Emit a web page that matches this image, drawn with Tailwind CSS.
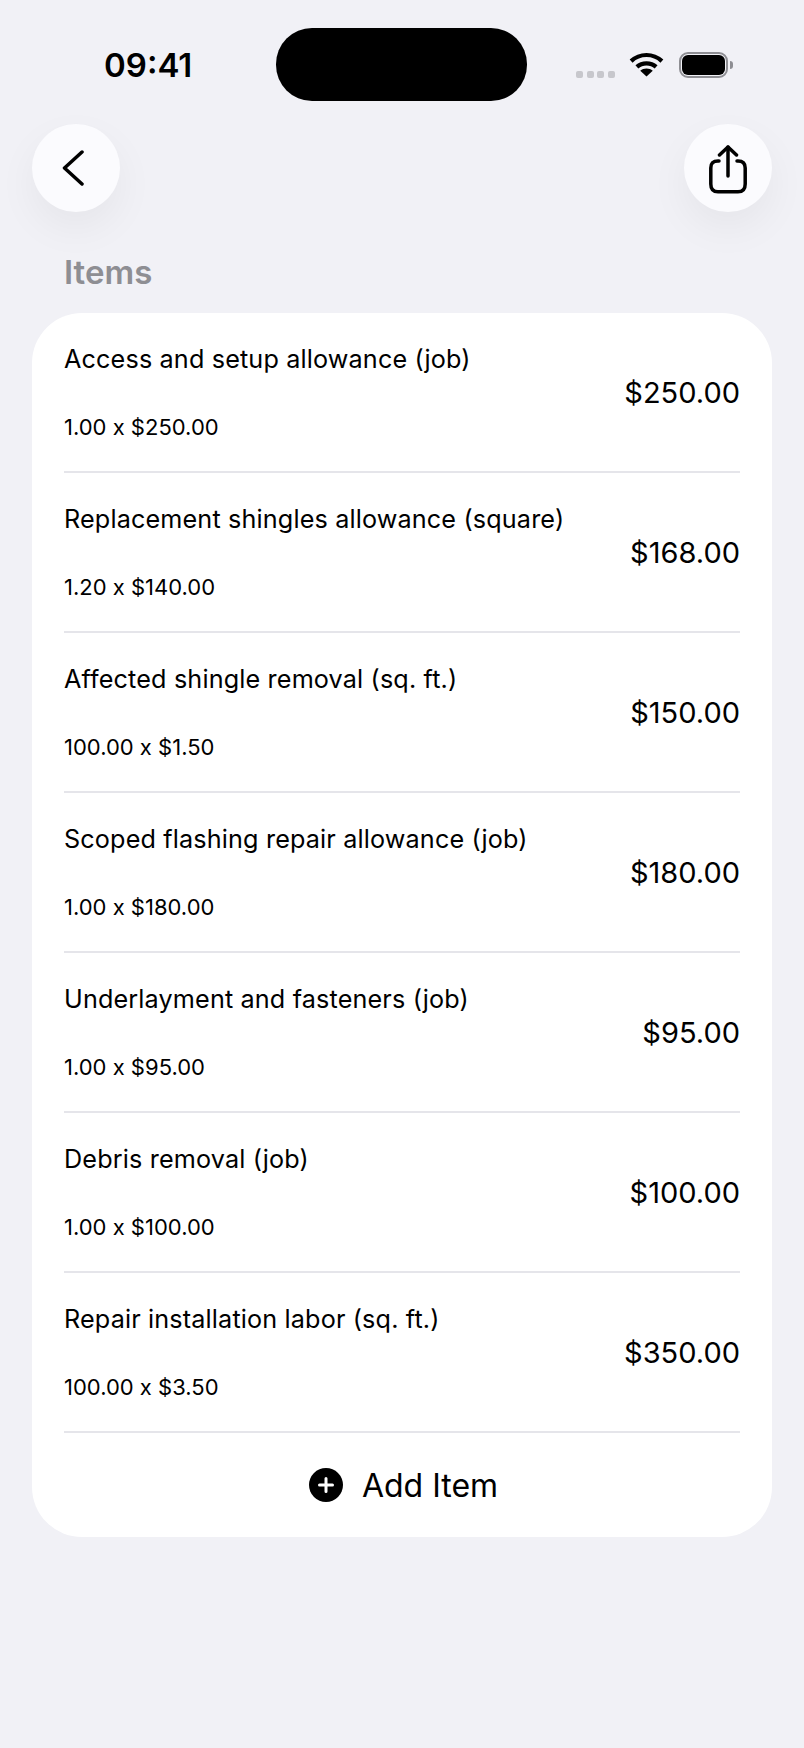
<!DOCTYPE html>
<html lang="en">
<head>
    <meta charset="UTF-8">
    <meta name="viewport" content="width=device-width, initial-scale=1.0">
    <title>Items</title>
    <script src="https://cdn.jsdelivr.net/npm/@tailwindcss/browser@4"></script>
</head>
<body class="bg-[#f1f1f6] w-[804px] h-[1748px] overflow-hidden font-['Inter',sans-serif] text-black">

    <!-- Status bar -->
    <div class="flex items-start h-[124px] pl-[104px]">
        <div class="w-[172px] mt-[45px] text-[33px] leading-[41px] font-semibold">09:41</div>
        <div class="w-[251px] h-[73px] mt-[28px] rounded-[36px] bg-black"></div>
        <div class="flex items-start ml-[49px]">
            <div class="flex gap-[3.67px] mt-[70.500px]">
                <span class="w-[7px] h-[7px] rounded-[2px] bg-[#c7c7cc]"></span>
                <span class="w-[7px] h-[7px] rounded-[2px] bg-[#c7c7cc]"></span>
                <span class="w-[7px] h-[7px] rounded-[2px] bg-[#c7c7cc]"></span>
                <span class="w-[7px] h-[7px] rounded-[2px] bg-[#c7c7cc]"></span>
            </div>
            <svg class="ml-[14px] mt-[52px]" width="35" height="25" viewBox="0 0 36 26" fill="none" stroke="black" stroke-width="4.4">
                <path d="M2 9.5C11 1 25 1 34 9.5"/>
                <path d="M8 15.5C13.5 10.5 22.500 10.500 28 15.500"/>
                <path d="M18 25.500L11.500 19.500C15 16.500 21 16.500 24.500 19.500Z" fill="black" stroke="none"/>
            </svg>
            <div class="flex items-center ml-[15px] mt-[52px]">
                <div class="w-[49px] h-[26px] p-[1px] rounded-[9px] border-2 border-[#8e8e93]">
                    <div class="w-full h-full rounded-[6px] bg-black"></div>
                </div>
                <div class="w-[3px] h-[8px] ml-[2px] rounded-r-[3px] bg-[#8e8e93]"></div>
            </div>
        </div>
    </div>

    <!-- Nav buttons -->
    <div class="flex justify-between px-[32px]">
        <button class="flex items-center justify-center w-[88px] h-[88px] rounded-full bg-[#fbfbfe] shadow-[0_16px_40px_rgba(0,0,0,0.05)]">
            <svg width="22" height="36" viewBox="0 0 22 36" fill="none" stroke="black" stroke-width="3.5" stroke-linecap="round" stroke-linejoin="round" class="mr-[6px]">
                <path d="M20 2L2.500 18L20 34"/>
            </svg>
        </button>
        <button class="flex items-center justify-center w-[88px] h-[88px] rounded-full bg-[#fbfbfe] shadow-[0_16px_40px_rgba(0,0,0,0.05)]">
            <svg width="38" height="49" viewBox="0 0 38 49" fill="none" stroke="black" stroke-width="3.5" stroke-linecap="round" stroke-linejoin="round" class="mt-[3px]">
                <path d="M10 16H9C4 16 1.800 18.500 1.800 23V39C1.800 44 4 46.800 9 46.800H29C34 46.800 36.200 44 36.200 39V23C36.200 18.500 34 16 29 16H28"/>
                <path d="M19 31V2"/>
                <path d="M10.500 10L19 2L27.500 10"/>
            </svg>
        </button>
    </div>

    <h2 class="mt-[41px] ml-[64px] text-[33px] leading-[39px] font-semibold text-[#8e8e93]">Items</h2>

    <!-- Items card -->
    <div class="mt-[21px] mx-[32px] w-[740px] rounded-[50px] bg-white">
        <div class="flex items-center justify-between h-[160px] mx-[32px] border-b-2 border-[#e5e5ea]">
            <div>
                <p class="text-[25.2px] leading-[30px] tracking-[0.15px]">Access and setup allowance (job)</p>
                <p class="mt-[40px] text-[22px] leading-[26px]">1.00 x $250.00</p>
            </div>
            <p class="mt-[1px] text-[29px] leading-[35px]">$250.00</p>
        </div>
        <div class="flex items-center justify-between h-[160px] mx-[32px] border-b-2 border-[#e5e5ea]">
            <div>
                <p class="text-[25.2px] leading-[30px] tracking-[0.15px]">Replacement shingles allowance (square)</p>
                <p class="mt-[40px] text-[22px] leading-[26px]">1.20 x $140.00</p>
            </div>
            <p class="mt-[1px] text-[29px] leading-[35px]">$168.00</p>
        </div>
        <div class="flex items-center justify-between h-[160px] mx-[32px] border-b-2 border-[#e5e5ea]">
            <div>
                <p class="text-[25.2px] leading-[30px] tracking-[0.15px]">Affected shingle removal (sq. ft.)</p>
                <p class="mt-[40px] text-[22px] leading-[26px]">100.00 x $1.50</p>
            </div>
            <p class="mt-[1px] text-[29px] leading-[35px]">$150.00</p>
        </div>
        <div class="flex items-center justify-between h-[160px] mx-[32px] border-b-2 border-[#e5e5ea]">
            <div>
                <p class="text-[25.2px] leading-[30px] tracking-[0.15px]">Scoped flashing repair allowance (job)</p>
                <p class="mt-[40px] text-[22px] leading-[26px]">1.00 x $180.00</p>
            </div>
            <p class="mt-[1px] text-[29px] leading-[35px]">$180.00</p>
        </div>
        <div class="flex items-center justify-between h-[160px] mx-[32px] border-b-2 border-[#e5e5ea]">
            <div>
                <p class="text-[25.2px] leading-[30px] tracking-[0.15px]">Underlayment and fasteners (job)</p>
                <p class="mt-[40px] text-[22px] leading-[26px]">1.00 x $95.00</p>
            </div>
            <p class="mt-[1px] text-[29px] leading-[35px]">$95.00</p>
        </div>
        <div class="flex items-center justify-between h-[160px] mx-[32px] border-b-2 border-[#e5e5ea]">
            <div>
                <p class="text-[25.2px] leading-[30px] tracking-[0.15px]">Debris removal (job)</p>
                <p class="mt-[40px] text-[22px] leading-[26px]">1.00 x $100.00</p>
            </div>
            <p class="mt-[1px] text-[29px] leading-[35px]">$100.00</p>
        </div>
        <div class="flex items-center justify-between h-[160px] mx-[32px] border-b-2 border-[#e5e5ea]">
            <div>
                <p class="text-[25.2px] leading-[30px] tracking-[0.15px]">Repair installation labor (sq. ft.)</p>
                <p class="mt-[40px] text-[22px] leading-[26px]">100.00 x $3.50</p>
            </div>
            <p class="mt-[1px] text-[29px] leading-[35px]">$350.00</p>
        </div>

        <!-- Add item -->
        <div class="flex items-center justify-center gap-[19px] h-[104px] pl-[3px]">
            <svg width="34" height="34" viewBox="0 0 34 34">
                <circle cx="17" cy="17" r="17" fill="black"/>
                <path d="M17 10.500V23.500M10.500 17H23.500" stroke="white" stroke-width="3" stroke-linecap="round"/>
            </svg>
            <span class="text-[32px] leading-[40px] mt-[2px]">Add Item</span>
        </div>
    </div>
</body>
</html>
